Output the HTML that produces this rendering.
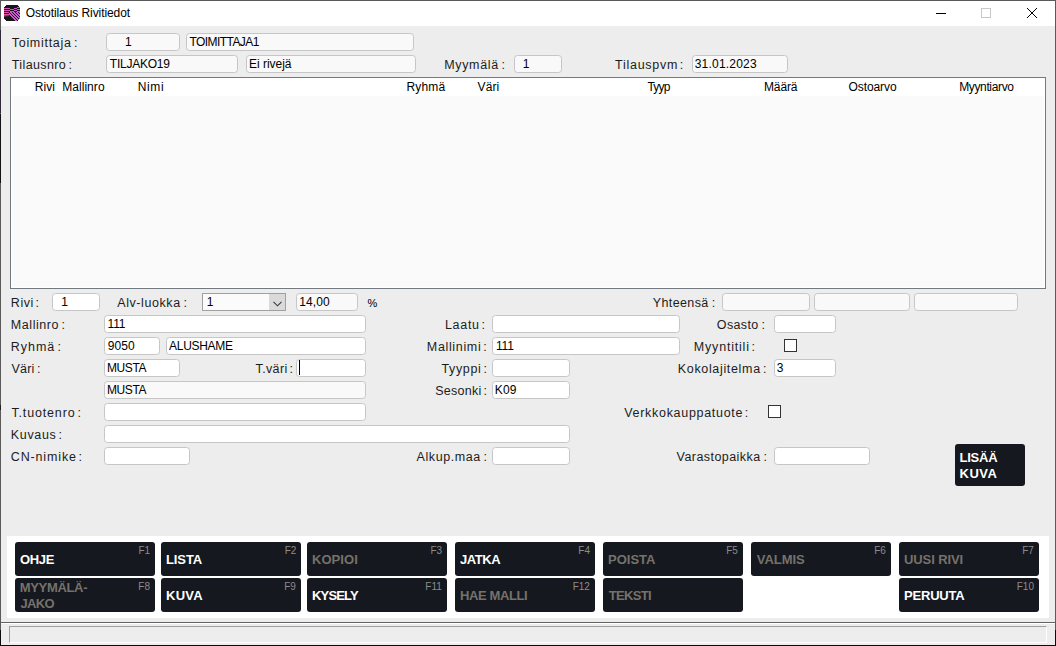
<!DOCTYPE html>
<html><head><meta charset="utf-8"><style>
html,body{margin:0;padding:0;width:1056px;height:646px;overflow:hidden;background:#ededed}
body{position:relative;font-family:"Liberation Sans",sans-serif}
.t{position:absolute;white-space:nowrap}
.f{position:absolute;box-sizing:border-box;border:1px solid #c6c6c6;border-radius:3.5px}
.b{position:absolute;background:#15181f;border-radius:3px}
</style></head><body>
<div style="position:absolute;left:0;top:0;width:1056px;height:646px;background:#5a5a5a"></div>
<div style="position:absolute;left:0;top:30px;width:1px;height:83px;background:#2f2838"></div>
<div style="position:absolute;left:0;top:114px;width:1px;height:69px;background:#121212"></div>
<div style="position:absolute;left:0;top:405px;width:1px;height:5px;background:#202020"></div>
<div style="position:absolute;left:0;top:630px;width:1px;height:16px;background:#0c0c0c"></div>
<div style="position:absolute;left:1055px;top:630px;width:1px;height:16px;background:#0c0c0c"></div>
<div style="position:absolute;left:0;top:645px;width:1056px;height:1px;background:#0c0c0c"></div>
<div style="position:absolute;left:1px;top:1px;width:1054px;height:25px;background:#fff"></div>
<div style="position:absolute;left:1px;top:26px;width:1054px;height:619px;background:#ededed"></div>
<svg style="position:absolute;left:4px;top:5px" width="16" height="16" viewBox="0 0 16 16" shape-rendering="crispEdges"><rect x="2" y="0" width="1" height="1" fill="#15171c"/><rect x="3" y="0" width="1" height="1" fill="#15171c"/><rect x="4" y="0" width="1" height="1" fill="#15171c"/><rect x="5" y="0" width="1" height="1" fill="#15171c"/><rect x="6" y="0" width="1" height="1" fill="#15171c"/><rect x="7" y="0" width="1" height="1" fill="#15171c"/><rect x="8" y="0" width="1" height="1" fill="#15171c"/><rect x="9" y="0" width="1" height="1" fill="#15171c"/><rect x="10" y="0" width="1" height="1" fill="#15171c"/><rect x="11" y="0" width="1" height="1" fill="#15171c"/><rect x="12" y="0" width="1" height="1" fill="#15171c"/><rect x="13" y="0" width="1" height="1" fill="#15171c"/><rect x="1" y="1" width="1" height="1" fill="#15171c"/><rect x="2" y="1" width="1" height="1" fill="#15171c"/><rect x="3" y="1" width="1" height="1" fill="#15171c"/><rect x="4" y="1" width="1" height="1" fill="#15171c"/><rect x="5" y="1" width="1" height="1" fill="#15171c"/><rect x="6" y="1" width="1" height="1" fill="#15171c"/><rect x="7" y="1" width="1" height="1" fill="#15171c"/><rect x="8" y="1" width="1" height="1" fill="#15171c"/><rect x="9" y="1" width="1" height="1" fill="#15171c"/><rect x="10" y="1" width="1" height="1" fill="#15171c"/><rect x="11" y="1" width="1" height="1" fill="#15171c"/><rect x="12" y="1" width="1" height="1" fill="#15171c"/><rect x="13" y="1" width="1" height="1" fill="#15171c"/><rect x="14" y="1" width="1" height="1" fill="#15171c"/><rect x="0" y="2" width="1" height="1" fill="#15171c"/><rect x="1" y="2" width="1" height="1" fill="#15171c"/><rect x="2" y="2" width="1" height="1" fill="#15171c"/><rect x="3" y="2" width="1" height="1" fill="#15171c"/><rect x="4" y="2" width="1" height="1" fill="#15171c"/><rect x="5" y="2" width="1" height="1" fill="#15171c"/><rect x="6" y="2" width="1" height="1" fill="#15171c"/><rect x="7" y="2" width="1" height="1" fill="#15171c"/><rect x="8" y="2" width="1" height="1" fill="#15171c"/><rect x="9" y="2" width="1" height="1" fill="#15171c"/><rect x="10" y="2" width="1" height="1" fill="#15171c"/><rect x="11" y="2" width="1" height="1" fill="#15171c"/><rect x="12" y="2" width="1" height="1" fill="#15171c"/><rect x="13" y="2" width="1" height="1" fill="#ce5adc"/><rect x="14" y="2" width="1" height="1" fill="#cd5be1"/><rect x="15" y="2" width="1" height="1" fill="#cc5ce6"/><rect x="0" y="3" width="1" height="1" fill="#e04ea2"/><rect x="1" y="3" width="1" height="1" fill="#de4ea6"/><rect x="2" y="3" width="1" height="1" fill="#dd4fab"/><rect x="3" y="3" width="1" height="1" fill="#dc50af"/><rect x="4" y="3" width="1" height="1" fill="#da51b4"/><rect x="5" y="3" width="1" height="1" fill="#d952b8"/><rect x="6" y="3" width="1" height="1" fill="#15171c"/><rect x="7" y="3" width="1" height="1" fill="#15171c"/><rect x="8" y="3" width="1" height="1" fill="#15171c"/><rect x="9" y="3" width="1" height="1" fill="#15171c"/><rect x="10" y="3" width="1" height="1" fill="#d257cf"/><rect x="11" y="3" width="1" height="1" fill="#d158d3"/><rect x="12" y="3" width="1" height="1" fill="#d059d8"/><rect x="13" y="3" width="1" height="1" fill="#15171c"/><rect x="14" y="3" width="1" height="1" fill="#15171c"/><rect x="15" y="3" width="1" height="1" fill="#15171c"/><rect x="0" y="4" width="1" height="1" fill="#15171c"/><rect x="1" y="4" width="1" height="1" fill="#15171c"/><rect x="2" y="4" width="1" height="1" fill="#15171c"/><rect x="3" y="4" width="1" height="1" fill="#15171c"/><rect x="4" y="4" width="1" height="1" fill="#15171c"/><rect x="5" y="4" width="1" height="1" fill="#15171c"/><rect x="6" y="4" width="1" height="1" fill="#d853bd"/><rect x="7" y="4" width="1" height="1" fill="#d654c1"/><rect x="8" y="4" width="1" height="1" fill="#d555c6"/><rect x="9" y="4" width="1" height="1" fill="#d456ca"/><rect x="10" y="4" width="1" height="1" fill="#15171c"/><rect x="11" y="4" width="1" height="1" fill="#15171c"/><rect x="12" y="4" width="1" height="1" fill="#15171c"/><rect x="13" y="4" width="1" height="1" fill="#ce5adc"/><rect x="14" y="4" width="1" height="1" fill="#cd5be1"/><rect x="15" y="4" width="1" height="1" fill="#cc5ce6"/><rect x="0" y="5" width="1" height="1" fill="#e04ea2"/><rect x="1" y="5" width="1" height="1" fill="#de4ea6"/><rect x="2" y="5" width="1" height="1" fill="#dd4fab"/><rect x="3" y="5" width="1" height="1" fill="#dc50af"/><rect x="4" y="5" width="1" height="1" fill="#da51b4"/><rect x="5" y="5" width="1" height="1" fill="#d952b8"/><rect x="6" y="5" width="1" height="1" fill="#15171c"/><rect x="7" y="5" width="1" height="1" fill="#15171c"/><rect x="8" y="5" width="1" height="1" fill="#15171c"/><rect x="9" y="5" width="1" height="1" fill="#15171c"/><rect x="10" y="5" width="1" height="1" fill="#d257cf"/><rect x="11" y="5" width="1" height="1" fill="#d158d3"/><rect x="12" y="5" width="1" height="1" fill="#d059d8"/><rect x="13" y="5" width="1" height="1" fill="#15171c"/><rect x="14" y="5" width="1" height="1" fill="#15171c"/><rect x="15" y="5" width="1" height="1" fill="#15171c"/><rect x="0" y="6" width="1" height="1" fill="#15171c"/><rect x="1" y="6" width="1" height="1" fill="#15171c"/><rect x="2" y="6" width="1" height="1" fill="#15171c"/><rect x="3" y="6" width="1" height="1" fill="#15171c"/><rect x="4" y="6" width="1" height="1" fill="#15171c"/><rect x="5" y="6" width="1" height="1" fill="#15171c"/><rect x="6" y="6" width="1" height="1" fill="#d853bd"/><rect x="7" y="6" width="1" height="1" fill="#d654c1"/><rect x="8" y="6" width="1" height="1" fill="#d555c6"/><rect x="9" y="6" width="1" height="1" fill="#d456ca"/><rect x="10" y="6" width="1" height="1" fill="#15171c"/><rect x="11" y="6" width="1" height="1" fill="#15171c"/><rect x="12" y="6" width="1" height="1" fill="#15171c"/><rect x="13" y="6" width="1" height="1" fill="#ce5adc"/><rect x="14" y="6" width="1" height="1" fill="#cd5be1"/><rect x="15" y="6" width="1" height="1" fill="#cc5ce6"/><rect x="0" y="7" width="1" height="1" fill="#e04ea2"/><rect x="1" y="7" width="1" height="1" fill="#de4ea6"/><rect x="2" y="7" width="1" height="1" fill="#dd4fab"/><rect x="3" y="7" width="1" height="1" fill="#dc50af"/><rect x="4" y="7" width="1" height="1" fill="#da51b4"/><rect x="5" y="7" width="1" height="1" fill="#15171c"/><rect x="6" y="7" width="1" height="1" fill="#d853bd"/><rect x="7" y="7" width="1" height="1" fill="#d654c1"/><rect x="8" y="7" width="1" height="1" fill="#15171c"/><rect x="9" y="7" width="1" height="1" fill="#d456ca"/><rect x="10" y="7" width="1" height="1" fill="#d257cf"/><rect x="11" y="7" width="1" height="1" fill="#15171c"/><rect x="12" y="7" width="1" height="1" fill="#d059d8"/><rect x="13" y="7" width="1" height="1" fill="#ce5adc"/><rect x="14" y="7" width="1" height="1" fill="#15171c"/><rect x="15" y="7" width="1" height="1" fill="#cc5ce6"/><rect x="0" y="8" width="1" height="1" fill="#15171c"/><rect x="1" y="8" width="1" height="1" fill="#15171c"/><rect x="2" y="8" width="1" height="1" fill="#15171c"/><rect x="3" y="8" width="1" height="1" fill="#15171c"/><rect x="4" y="8" width="1" height="1" fill="#15171c"/><rect x="5" y="8" width="1" height="1" fill="#d952b8"/><rect x="6" y="8" width="1" height="1" fill="#15171c"/><rect x="7" y="8" width="1" height="1" fill="#d654c1"/><rect x="8" y="8" width="1" height="1" fill="#d555c6"/><rect x="9" y="8" width="1" height="1" fill="#15171c"/><rect x="10" y="8" width="1" height="1" fill="#d257cf"/><rect x="11" y="8" width="1" height="1" fill="#d158d3"/><rect x="12" y="8" width="1" height="1" fill="#15171c"/><rect x="13" y="8" width="1" height="1" fill="#ce5adc"/><rect x="14" y="8" width="1" height="1" fill="#cd5be1"/><rect x="15" y="8" width="1" height="1" fill="#15171c"/><rect x="0" y="9" width="1" height="1" fill="#e04ea2"/><rect x="1" y="9" width="1" height="1" fill="#de4ea6"/><rect x="2" y="9" width="1" height="1" fill="#dd4fab"/><rect x="3" y="9" width="1" height="1" fill="#dc50af"/><rect x="4" y="9" width="1" height="1" fill="#da51b4"/><rect x="5" y="9" width="1" height="1" fill="#d952b8"/><rect x="6" y="9" width="1" height="1" fill="#d853bd"/><rect x="7" y="9" width="1" height="1" fill="#15171c"/><rect x="8" y="9" width="1" height="1" fill="#d555c6"/><rect x="9" y="9" width="1" height="1" fill="#d456ca"/><rect x="10" y="9" width="1" height="1" fill="#15171c"/><rect x="11" y="9" width="1" height="1" fill="#d158d3"/><rect x="12" y="9" width="1" height="1" fill="#d059d8"/><rect x="13" y="9" width="1" height="1" fill="#15171c"/><rect x="14" y="9" width="1" height="1" fill="#cd5be1"/><rect x="15" y="9" width="1" height="1" fill="#cc5ce6"/><rect x="0" y="10" width="1" height="1" fill="#ad4080"/><rect x="1" y="10" width="1" height="1" fill="#9b3b78"/><rect x="2" y="10" width="1" height="1" fill="#8b3870"/><rect x="3" y="10" width="1" height="1" fill="#7a3466"/><rect x="4" y="10" width="1" height="1" fill="#692f5d"/><rect x="5" y="10" width="1" height="1" fill="#15171c"/><rect x="6" y="10" width="1" height="1" fill="#d853bd"/><rect x="7" y="10" width="1" height="1" fill="#d654c1"/><rect x="8" y="10" width="1" height="1" fill="#15171c"/><rect x="9" y="10" width="1" height="1" fill="#d456ca"/><rect x="10" y="10" width="1" height="1" fill="#d257cf"/><rect x="11" y="10" width="1" height="1" fill="#15171c"/><rect x="12" y="10" width="1" height="1" fill="#d059d8"/><rect x="13" y="10" width="1" height="1" fill="#ce5adc"/><rect x="14" y="10" width="1" height="1" fill="#15171c"/><rect x="15" y="10" width="1" height="1" fill="#cc5ce6"/><rect x="0" y="11" width="1" height="1" fill="#5c2a4a"/><rect x="1" y="11" width="1" height="1" fill="#4d2642"/><rect x="2" y="11" width="1" height="1" fill="#3e223a"/><rect x="3" y="11" width="1" height="1" fill="#301e30"/><rect x="4" y="11" width="1" height="1" fill="#15171c"/><rect x="5" y="11" width="1" height="1" fill="#15171c"/><rect x="6" y="11" width="1" height="1" fill="#15171c"/><rect x="7" y="11" width="1" height="1" fill="#d654c1"/><rect x="8" y="11" width="1" height="1" fill="#d555c6"/><rect x="9" y="11" width="1" height="1" fill="#15171c"/><rect x="10" y="11" width="1" height="1" fill="#d257cf"/><rect x="11" y="11" width="1" height="1" fill="#d158d3"/><rect x="12" y="11" width="1" height="1" fill="#15171c"/><rect x="13" y="11" width="1" height="1" fill="#ce5adc"/><rect x="14" y="11" width="1" height="1" fill="#cd5be1"/><rect x="15" y="11" width="1" height="1" fill="#15171c"/><rect x="0" y="12" width="1" height="1" fill="#15171c"/><rect x="1" y="12" width="1" height="1" fill="#15171c"/><rect x="2" y="12" width="1" height="1" fill="#15171c"/><rect x="3" y="12" width="1" height="1" fill="#15171c"/><rect x="4" y="12" width="1" height="1" fill="#15171c"/><rect x="5" y="12" width="1" height="1" fill="#15171c"/><rect x="6" y="12" width="1" height="1" fill="#15171c"/><rect x="7" y="12" width="1" height="1" fill="#15171c"/><rect x="8" y="12" width="1" height="1" fill="#d555c6"/><rect x="9" y="12" width="1" height="1" fill="#d456ca"/><rect x="10" y="12" width="1" height="1" fill="#15171c"/><rect x="11" y="12" width="1" height="1" fill="#d158d3"/><rect x="12" y="12" width="1" height="1" fill="#d059d8"/><rect x="13" y="12" width="1" height="1" fill="#15171c"/><rect x="14" y="12" width="1" height="1" fill="#cd5be1"/><rect x="15" y="12" width="1" height="1" fill="#cc5ce6"/><rect x="0" y="13" width="1" height="1" fill="#15171c"/><rect x="1" y="13" width="1" height="1" fill="#15171c"/><rect x="2" y="13" width="1" height="1" fill="#15171c"/><rect x="3" y="13" width="1" height="1" fill="#15171c"/><rect x="4" y="13" width="1" height="1" fill="#15171c"/><rect x="5" y="13" width="1" height="1" fill="#15171c"/><rect x="6" y="13" width="1" height="1" fill="#15171c"/><rect x="7" y="13" width="1" height="1" fill="#15171c"/><rect x="8" y="13" width="1" height="1" fill="#15171c"/><rect x="9" y="13" width="1" height="1" fill="#d456ca"/><rect x="10" y="13" width="1" height="1" fill="#d257cf"/><rect x="11" y="13" width="1" height="1" fill="#15171c"/><rect x="12" y="13" width="1" height="1" fill="#d059d8"/><rect x="13" y="13" width="1" height="1" fill="#ce5adc"/><rect x="14" y="13" width="1" height="1" fill="#15171c"/><rect x="15" y="13" width="1" height="1" fill="#cc5ce6"/><rect x="1" y="14" width="1" height="1" fill="#15171c"/><rect x="2" y="14" width="1" height="1" fill="#15171c"/><rect x="3" y="14" width="1" height="1" fill="#15171c"/><rect x="4" y="14" width="1" height="1" fill="#15171c"/><rect x="5" y="14" width="1" height="1" fill="#15171c"/><rect x="6" y="14" width="1" height="1" fill="#15171c"/><rect x="7" y="14" width="1" height="1" fill="#15171c"/><rect x="8" y="14" width="1" height="1" fill="#15171c"/><rect x="9" y="14" width="1" height="1" fill="#15171c"/><rect x="10" y="14" width="1" height="1" fill="#d257cf"/><rect x="11" y="14" width="1" height="1" fill="#d158d3"/><rect x="12" y="14" width="1" height="1" fill="#15171c"/><rect x="13" y="14" width="1" height="1" fill="#ce5adc"/><rect x="14" y="14" width="1" height="1" fill="#cd5be1"/><rect x="2" y="15" width="1" height="1" fill="#15171c"/><rect x="3" y="15" width="1" height="1" fill="#15171c"/><rect x="4" y="15" width="1" height="1" fill="#15171c"/><rect x="5" y="15" width="1" height="1" fill="#15171c"/><rect x="6" y="15" width="1" height="1" fill="#15171c"/><rect x="7" y="15" width="1" height="1" fill="#15171c"/><rect x="8" y="15" width="1" height="1" fill="#15171c"/><rect x="9" y="15" width="1" height="1" fill="#15171c"/><rect x="10" y="15" width="1" height="1" fill="#15171c"/><rect x="11" y="15" width="1" height="1" fill="#d158d3"/><rect x="12" y="15" width="1" height="1" fill="#d059d8"/><rect x="13" y="15" width="1" height="1" fill="#15171c"/></svg>
<div class="t" id="t1" style="left:25.63px;top:4.84px;font-size:12px;line-height:16px;color:#000;letter-spacing:-0.077px;">Ostotilaus Rivitiedot</div>
<div style="position:absolute;left:936px;top:13px;width:10px;height:1px;background:#000"></div>
<div style="position:absolute;left:981px;top:8px;width:10px;height:10px;border:1px solid #c8c8c8;box-sizing:border-box"></div>
<svg style="position:absolute;left:1027px;top:8px" width="10" height="10" viewBox="0 0 10 10"><path d="M0 0L10 10M10 0L0 10" stroke="#000" stroke-width="1"/></svg>
<div class="t" id="t2" style="left:11.78px;top:34.67px;font-size:12.5px;line-height:16px;color:#1c1c1c;letter-spacing:0.704px;">Toimittaja</div>
<div class="t" id="t3" style="left:74.08px;top:34.67px;font-size:12.5px;line-height:16px;color:#1c1c1c;">:</div>
<div class="f" style="left:106px;top:33px;width:74px;height:18px;background:#f9f9f9"></div>
<div class="t" id="t4" style="left:124.89px;top:33.84px;font-size:12px;line-height:16px;color:#000;">1</div>
<div class="f" style="left:186px;top:33px;width:228px;height:18px;background:#f9f9f9"></div>
<div class="t" id="t5" style="left:189.48px;top:33.84px;font-size:12px;line-height:16px;color:#000;letter-spacing:-0.567px;">TOIMITTAJA1</div>
<div class="t" id="t6" style="left:11.78px;top:56.67px;font-size:12.5px;line-height:16px;color:#1c1c1c;letter-spacing:0.387px;">Tilausnro</div>
<div class="t" id="t7" style="left:68.39px;top:56.67px;font-size:12.5px;line-height:16px;color:#1c1c1c;">:</div>
<div class="f" style="left:106px;top:55px;width:132px;height:18px;background:#f9f9f9"></div>
<div class="t" id="t8" style="left:109.85px;top:55.84px;font-size:12px;line-height:16px;color:#000;letter-spacing:-0.236px;">TILJAKO19</div>
<div class="f" style="left:246px;top:55px;width:170px;height:18px;background:#f9f9f9"></div>
<div class="t" id="t9" style="left:249.04px;top:55.84px;font-size:12px;line-height:16px;color:#000;letter-spacing:-0.026px;">Ei rivejä</div>
<div class="t" id="t10" style="left:444.15px;top:56.67px;font-size:12.5px;line-height:16px;color:#1c1c1c;letter-spacing:0.666px;">Myymälä</div>
<div class="t" id="t11" style="left:501.56px;top:56.67px;font-size:12.5px;line-height:16px;color:#1c1c1c;">:</div>
<div class="f" style="left:514px;top:55px;width:48px;height:18px;background:#f9f9f9"></div>
<div class="t" id="t12" style="left:522.82px;top:55.84px;font-size:12px;line-height:16px;color:#000;">1</div>
<div class="t" id="t13" style="left:615.11px;top:56.67px;font-size:12.5px;line-height:16px;color:#1c1c1c;letter-spacing:0.719px;">Tilauspvm</div>
<div class="t" id="t14" style="left:679.67px;top:56.67px;font-size:12.5px;line-height:16px;color:#1c1c1c;">:</div>
<div class="f" style="left:692px;top:55px;width:96px;height:18px;background:#f9f9f9"></div>
<div class="t" id="t15" style="left:694.67px;top:55.84px;font-size:12px;line-height:16px;color:#000;letter-spacing:0.217px;">31.01.2023</div>
<div style="position:absolute;left:10px;top:77px;width:1036px;height:212px;box-sizing:border-box;border:1px solid #737980;background:#fff"></div>
<div style="position:absolute;left:12px;top:96px;width:1032px;height:191px;background:#fafafa"></div>
<div class="t" id="t16" style="left:34.67px;top:78.84px;font-size:12px;line-height:16px;color:#000;letter-spacing:0.094px;">Rivi</div>
<div class="t" id="t17" style="left:62.15px;top:78.84px;font-size:12px;line-height:16px;color:#000;letter-spacing:0.060px;">Mallinro</div>
<div class="t" id="t18" style="left:137.82px;top:78.84px;font-size:12px;line-height:16px;color:#000;letter-spacing:0.584px;">Nimi</div>
<div class="t" id="t19" style="left:406.56px;top:78.84px;font-size:12px;line-height:16px;color:#000;letter-spacing:0.126px;">Ryhmä</div>
<div class="t" id="t20" style="left:477.52px;top:78.84px;font-size:12px;line-height:16px;color:#000;letter-spacing:0.117px;">Väri</div>
<div class="t" id="t21" style="left:647.48px;top:78.84px;font-size:12px;line-height:16px;color:#000;letter-spacing:-0.817px;">Tyyp</div>
<div class="t" id="t22" style="left:764.04px;top:78.84px;font-size:12px;line-height:16px;color:#000;letter-spacing:-0.161px;">Määrä</div>
<div class="t" id="t23" style="left:848.48px;top:78.84px;font-size:12px;line-height:16px;color:#000;letter-spacing:-0.080px;">Ostoarvo</div>
<div class="t" id="t24" style="left:959.15px;top:78.84px;font-size:12px;line-height:16px;color:#000;letter-spacing:-0.356px;">Myyntiarvo</div>
<div class="t" id="t25" style="left:10.82px;top:294.67px;font-size:12.5px;line-height:16px;color:#1c1c1c;letter-spacing:0.538px;">Rivi</div>
<div class="t" id="t26" style="left:35.45px;top:294.67px;font-size:12.5px;line-height:16px;color:#1c1c1c;">:</div>
<div class="f" style="left:52px;top:293px;width:48px;height:18px;background:#fff"></div>
<div class="t" id="t27" style="left:61.30px;top:293.84px;font-size:12px;line-height:16px;color:#000;">1</div>
<div class="t" id="t28" style="left:117.26px;top:294.67px;font-size:12.5px;line-height:16px;color:#1c1c1c;letter-spacing:0.576px;">Alv-luokka</div>
<div class="t" id="t29" style="left:183.56px;top:294.67px;font-size:12.5px;line-height:16px;color:#1c1c1c;">:</div>
<div style="position:absolute;left:202px;top:293px;width:84px;height:18px;box-sizing:border-box;border:1px solid #a0a0a0;background:#fbfbfb"></div>
<div style="position:absolute;left:269px;top:294px;width:16px;height:16px;background:#dadada"></div>
<svg style="position:absolute;left:273px;top:301px" width="9" height="6" viewBox="0 0 9 6"><path d="M0.5 0.8L4.5 4.8L8.5 0.8" stroke="#3a3a3a" stroke-width="1.1" fill="none"/></svg>
<div class="t" id="t30" style="left:206.67px;top:293.84px;font-size:12px;line-height:16px;color:#000;">1</div>
<div class="f" style="left:296px;top:293px;width:62px;height:18px;background:#f9f9f9"></div>
<div class="t" id="t31" style="left:299.15px;top:293.84px;font-size:12px;line-height:16px;color:#000;letter-spacing:0.105px;">14,00</div>
<div class="t" id="t32" style="left:367.48px;top:295.19px;font-size:11px;line-height:16px;color:#000;">%</div>
<div class="t" id="t33" style="left:652.74px;top:294.67px;font-size:12.5px;line-height:16px;color:#1c1c1c;letter-spacing:0.385px;">Yhteensä</div>
<div class="t" id="t34" style="left:711.67px;top:294.67px;font-size:12.5px;line-height:16px;color:#1c1c1c;">:</div>
<div class="f" style="left:722px;top:293px;width:88px;height:18px;background:#f9f9f9"></div>
<div class="f" style="left:814px;top:293px;width:96px;height:18px;background:#f9f9f9"></div>
<div class="f" style="left:914px;top:293px;width:104px;height:18px;background:#f9f9f9"></div>
<div class="t" id="t35" style="left:10.82px;top:316.67px;font-size:12.5px;line-height:16px;color:#1c1c1c;letter-spacing:0.560px;">Mallinro</div>
<div class="t" id="t36" style="left:61.56px;top:316.67px;font-size:12.5px;line-height:16px;color:#1c1c1c;">:</div>
<div class="f" style="left:104px;top:315px;width:262px;height:18px;background:#fff"></div>
<div class="t" id="t37" style="left:107.56px;top:315.84px;font-size:12px;line-height:16px;color:#000;letter-spacing:-0.200px;">111</div>
<div class="t" id="t38" style="left:444.93px;top:316.67px;font-size:12.5px;line-height:16px;color:#1c1c1c;letter-spacing:0.700px;">Laatu</div>
<div class="t" id="t39" style="left:481.45px;top:316.67px;font-size:12.5px;line-height:16px;color:#1c1c1c;">:</div>
<div class="f" style="left:492px;top:315px;width:188px;height:18px;background:#fff"></div>
<div class="t" id="t40" style="left:716.78px;top:316.67px;font-size:12.5px;line-height:16px;color:#1c1c1c;letter-spacing:0.392px;">Osasto</div>
<div class="t" id="t41" style="left:761.56px;top:316.67px;font-size:12.5px;line-height:16px;color:#1c1c1c;">:</div>
<div class="f" style="left:774px;top:315px;width:62px;height:18px;background:#fff"></div>
<div class="t" id="t42" style="left:10.82px;top:338.67px;font-size:12.5px;line-height:16px;color:#1c1c1c;letter-spacing:0.980px;">Ryhmä</div>
<div class="t" id="t43" style="left:57.56px;top:338.67px;font-size:12.5px;line-height:16px;color:#1c1c1c;">:</div>
<div class="f" style="left:104px;top:337px;width:56px;height:18px;background:#fff"></div>
<div class="t" id="t44" style="left:107.74px;top:337.84px;font-size:12px;line-height:16px;color:#000;letter-spacing:0.071px;">9050</div>
<div class="f" style="left:166px;top:337px;width:200px;height:18px;background:#fff"></div>
<div class="t" id="t45" style="left:169.11px;top:337.84px;font-size:12px;line-height:16px;color:#000;letter-spacing:-0.310px;">ALUSHAME</div>
<div class="t" id="t46" style="left:426.82px;top:338.67px;font-size:12.5px;line-height:16px;color:#1c1c1c;letter-spacing:0.657px;">Mallinimi</div>
<div class="t" id="t47" style="left:483.19px;top:338.67px;font-size:12.5px;line-height:16px;color:#1c1c1c;">:</div>
<div class="f" style="left:492px;top:337px;width:188px;height:18px;background:#fff"></div>
<div class="t" id="t48" style="left:496.04px;top:337.84px;font-size:12px;line-height:16px;color:#000;letter-spacing:-0.200px;">111</div>
<div class="t" id="t49" style="left:693.82px;top:338.67px;font-size:12.5px;line-height:16px;color:#1c1c1c;letter-spacing:0.801px;">Myyntitili</div>
<div class="t" id="t50" style="left:751.45px;top:338.67px;font-size:12.5px;line-height:16px;color:#1c1c1c;">:</div>
<div style="position:absolute;left:784px;top:339px;width:13px;height:13px;box-sizing:border-box;border:1px solid #333;background:#fff"></div>
<div class="t" id="t51" style="left:11.48px;top:360.67px;font-size:12.5px;line-height:16px;color:#1c1c1c;letter-spacing:0.210px;">Väri</div>
<div class="t" id="t52" style="left:36.93px;top:360.67px;font-size:12.5px;line-height:16px;color:#1c1c1c;">:</div>
<div class="f" style="left:104px;top:359px;width:76px;height:18px;background:#fff"></div>
<div class="t" id="t53" style="left:107.04px;top:359.84px;font-size:12px;line-height:16px;color:#000;letter-spacing:-0.438px;">MUSTA</div>
<div class="t" id="t54" style="left:255.59px;top:360.67px;font-size:12.5px;line-height:16px;color:#1c1c1c;letter-spacing:0.350px;">T.väri</div>
<div class="t" id="t55" style="left:289.56px;top:360.67px;font-size:12.5px;line-height:16px;color:#1c1c1c;">:</div>
<div class="f" style="left:296px;top:359px;width:70px;height:18px;background:#fff"></div>
<div style="position:absolute;left:299px;top:360px;width:1px;height:15px;background:#000"></div>
<div class="t" id="t56" style="left:441.48px;top:360.67px;font-size:12.5px;line-height:16px;color:#1c1c1c;letter-spacing:0.630px;">Tyyppi</div>
<div class="t" id="t57" style="left:483.45px;top:360.67px;font-size:12.5px;line-height:16px;color:#1c1c1c;">:</div>
<div class="f" style="left:492px;top:359px;width:78px;height:18px;background:#fff"></div>
<div class="t" id="t58" style="left:677.78px;top:360.67px;font-size:12.5px;line-height:16px;color:#1c1c1c;letter-spacing:0.665px;">Kokolajitelma</div>
<div class="t" id="t59" style="left:763.08px;top:360.67px;font-size:12.5px;line-height:16px;color:#1c1c1c;">:</div>
<div class="f" style="left:774px;top:359px;width:62px;height:18px;background:#fff"></div>
<div class="t" id="t60" style="left:776.67px;top:359.84px;font-size:12px;line-height:16px;color:#000;">3</div>
<div class="f" style="left:104px;top:381px;width:262px;height:18px;background:#f9f9f9"></div>
<div class="t" id="t61" style="left:107.04px;top:381.84px;font-size:12px;line-height:16px;color:#000;letter-spacing:-0.438px;">MUSTA</div>
<div class="t" id="t62" style="left:435.15px;top:382.67px;font-size:12.5px;line-height:16px;color:#1c1c1c;letter-spacing:0.280px;">Sesonki</div>
<div class="t" id="t63" style="left:483.45px;top:382.67px;font-size:12.5px;line-height:16px;color:#1c1c1c;">:</div>
<div class="f" style="left:492px;top:381px;width:78px;height:18px;background:#fff"></div>
<div class="t" id="t64" style="left:494.67px;top:381.84px;font-size:12px;line-height:16px;color:#000;letter-spacing:0.245px;">K09</div>
<div class="t" id="t65" style="left:11.48px;top:404.67px;font-size:12.5px;line-height:16px;color:#1c1c1c;letter-spacing:0.840px;">T.tuotenro</div>
<div class="t" id="t66" style="left:77.56px;top:404.67px;font-size:12.5px;line-height:16px;color:#1c1c1c;">:</div>
<div class="f" style="left:104px;top:403px;width:262px;height:18px;background:#fff"></div>
<div class="t" id="t67" style="left:624.26px;top:404.67px;font-size:12.5px;line-height:16px;color:#1c1c1c;letter-spacing:0.697px;">Verkkokauppatuote</div>
<div class="t" id="t68" style="left:744.71px;top:404.67px;font-size:12.5px;line-height:16px;color:#1c1c1c;">:</div>
<div style="position:absolute;left:768px;top:405px;width:13px;height:13px;box-sizing:border-box;border:1px solid #333;background:#fff"></div>
<div class="t" id="t69" style="left:10.82px;top:426.67px;font-size:12.5px;line-height:16px;color:#1c1c1c;letter-spacing:0.644px;">Kuvaus</div>
<div class="t" id="t70" style="left:58.56px;top:426.67px;font-size:12.5px;line-height:16px;color:#1c1c1c;">:</div>
<div class="f" style="left:104px;top:425px;width:466px;height:18px;background:#fff"></div>
<div class="t" id="t71" style="left:10.78px;top:448.67px;font-size:12.5px;line-height:16px;color:#1c1c1c;letter-spacing:0.859px;">CN-nimike</div>
<div class="t" id="t72" style="left:78.56px;top:448.67px;font-size:12.5px;line-height:16px;color:#1c1c1c;">:</div>
<div class="f" style="left:104px;top:447px;width:86px;height:18px;background:#fff"></div>
<div class="t" id="t73" style="left:416.59px;top:448.67px;font-size:12.5px;line-height:16px;color:#1c1c1c;letter-spacing:0.568px;">Alkup.maa</div>
<div class="t" id="t74" style="left:483.56px;top:448.67px;font-size:12.5px;line-height:16px;color:#1c1c1c;">:</div>
<div class="f" style="left:492px;top:447px;width:78px;height:18px;background:#fff"></div>
<div class="t" id="t75" style="left:676.59px;top:448.67px;font-size:12.5px;line-height:16px;color:#1c1c1c;letter-spacing:0.438px;">Varastopaikka</div>
<div class="t" id="t76" style="left:763.56px;top:448.67px;font-size:12.5px;line-height:16px;color:#1c1c1c;">:</div>
<div class="f" style="left:774px;top:447px;width:96px;height:18px;background:#fff"></div>
<div class="b" style="left:955px;top:444px;width:70px;height:42px"></div>
<div class="t" id="t77" style="left:959.56px;top:449.50px;font-size:13px;line-height:16px;color:#fff;letter-spacing:-0.245px;font-weight:bold;">LISÄÄ</div>
<div class="t" id="t78" style="left:959.56px;top:465.50px;font-size:13px;line-height:16px;color:#fff;letter-spacing:0.466px;font-weight:bold;">KUVA</div>
<div style="position:absolute;left:7px;top:536px;width:1042px;height:82px;background:#fff"></div>
<div class="b" style="left:15px;top:542px;width:140px;height:34px"></div>
<div class="t" id="t79" style="left:20.04px;top:551.50px;font-size:13px;line-height:16px;color:#fff;letter-spacing:-0.350px;font-weight:bold;">OHJE</div>
<div class="t" id="t80" style="left:138.43px;top:542.53px;font-size:10px;line-height:16px;color:#8c8c8c;">F1</div>
<div class="b" style="left:161px;top:542px;width:140px;height:34px"></div>
<div class="t" id="t81" style="left:166.04px;top:551.50px;font-size:13px;line-height:16px;color:#fff;letter-spacing:-0.119px;font-weight:bold;">LISTA</div>
<div class="t" id="t82" style="left:284.78px;top:542.53px;font-size:10px;line-height:16px;color:#8c8c8c;">F2</div>
<div class="b" style="left:307px;top:542px;width:140px;height:34px"></div>
<div class="t" id="t83" style="left:312.04px;top:551.50px;font-size:13px;line-height:16px;color:#75726b;letter-spacing:0.042px;font-weight:bold;">KOPIOI</div>
<div class="t" id="t84" style="left:430.52px;top:542.53px;font-size:10px;line-height:16px;color:#8c8c8c;">F3</div>
<div class="b" style="left:455px;top:542px;width:140px;height:34px"></div>
<div class="t" id="t85" style="left:460.04px;top:551.50px;font-size:13px;line-height:16px;color:#fff;letter-spacing:-0.420px;font-weight:bold;">JATKA</div>
<div class="t" id="t86" style="left:578.32px;top:542.53px;font-size:10px;line-height:16px;color:#8c8c8c;">F4</div>
<div class="b" style="left:603px;top:542px;width:140px;height:34px"></div>
<div class="t" id="t87" style="left:608.04px;top:551.50px;font-size:13px;line-height:16px;color:#75726b;letter-spacing:-0.014px;font-weight:bold;">POISTA</div>
<div class="t" id="t88" style="left:726.18px;top:542.53px;font-size:10px;line-height:16px;color:#8c8c8c;">F5</div>
<div class="b" style="left:751px;top:542px;width:140px;height:34px"></div>
<div class="t" id="t89" style="left:756.74px;top:551.50px;font-size:13px;line-height:16px;color:#75726b;letter-spacing:-0.028px;font-weight:bold;">VALMIS</div>
<div class="t" id="t90" style="left:874.18px;top:542.53px;font-size:10px;line-height:16px;color:#8c8c8c;">F6</div>
<div class="b" style="left:899px;top:542px;width:140px;height:34px"></div>
<div class="t" id="t91" style="left:904.04px;top:551.50px;font-size:13px;line-height:16px;color:#75726b;letter-spacing:-0.113px;font-weight:bold;">UUSI RIVI</div>
<div class="t" id="t92" style="left:1022.24px;top:542.53px;font-size:10px;line-height:16px;color:#8c8c8c;">F7</div>
<div class="b" style="left:15px;top:578px;width:140px;height:34px"></div>
<div class="t" id="t93" style="left:19.78px;top:579.50px;font-size:13px;line-height:16px;color:#75726b;letter-spacing:-0.330px;font-weight:bold;">MYYMÄLÄ-</div>
<div class="t" id="t94" style="left:20.48px;top:595.50px;font-size:13px;line-height:16px;color:#75726b;letter-spacing:-0.629px;font-weight:bold;">JAKO</div>
<div class="t" id="t95" style="left:138.29px;top:578.53px;font-size:10px;line-height:16px;color:#8c8c8c;">F8</div>
<div class="b" style="left:161px;top:578px;width:140px;height:34px"></div>
<div class="t" id="t96" style="left:166.04px;top:587.50px;font-size:13px;line-height:16px;color:#fff;letter-spacing:0.280px;font-weight:bold;">KUVA</div>
<div class="t" id="t97" style="left:284.22px;top:578.53px;font-size:10px;line-height:16px;color:#8c8c8c;">F9</div>
<div class="b" style="left:307px;top:578px;width:140px;height:34px"></div>
<div class="t" id="t98" style="left:312.04px;top:587.50px;font-size:13px;line-height:16px;color:#fff;letter-spacing:-0.854px;font-weight:bold;">KYSELY</div>
<div class="t" id="t99" style="left:425.37px;top:578.53px;font-size:10px;line-height:16px;color:#8c8c8c;">F11</div>
<div class="b" style="left:455px;top:578px;width:140px;height:34px"></div>
<div class="t" id="t100" style="left:460.04px;top:587.50px;font-size:13px;line-height:16px;color:#75726b;letter-spacing:-0.386px;font-weight:bold;">HAE MALLI</div>
<div class="t" id="t101" style="left:572.70px;top:578.53px;font-size:10px;line-height:16px;color:#8c8c8c;">F12</div>
<div class="b" style="left:603px;top:578px;width:140px;height:34px"></div>
<div class="t" id="t102" style="left:608.74px;top:587.50px;font-size:13px;line-height:16px;color:#75726b;letter-spacing:-0.686px;font-weight:bold;">TEKSTI</div>
<div class="b" style="left:899px;top:578px;width:140px;height:34px"></div>
<div class="t" id="t103" style="left:904.04px;top:587.50px;font-size:13px;line-height:16px;color:#fff;letter-spacing:-0.198px;font-weight:bold;">PERUUTA</div>
<div class="t" id="t104" style="left:1016.72px;top:578.53px;font-size:10px;line-height:16px;color:#8c8c8c;">F10</div>
<div style="position:absolute;left:1px;top:622px;width:1054px;height:1px;background:#646464"></div>
<div style="position:absolute;left:1px;top:623px;width:1054px;height:1px;background:#fff"></div>
<div style="position:absolute;left:9px;top:626px;width:1038px;height:17px;box-sizing:border-box;border-top:1px solid #a0a0a0;border-left:1px solid #a0a0a0;border-right:1px solid #fff;border-bottom:1px solid #fff;background:#ededed"></div>
</body></html>
